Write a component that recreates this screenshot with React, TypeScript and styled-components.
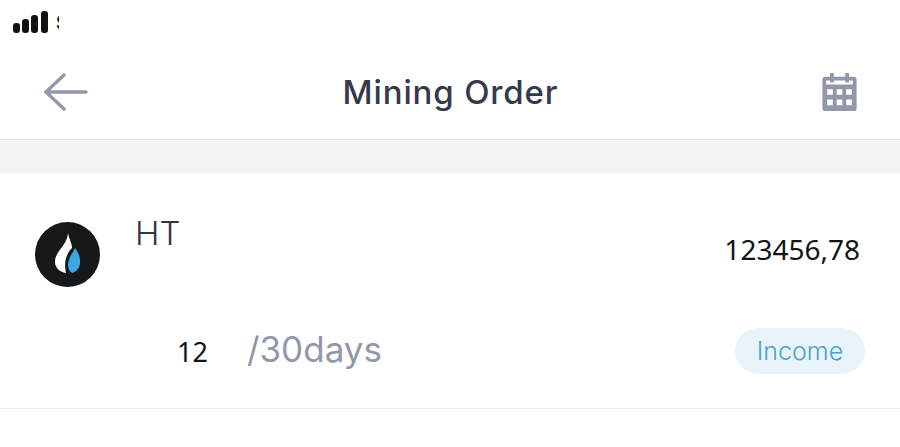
import React from 'react';
import styled, { createGlobalStyle } from 'styled-components';

const GlobalStyle = createGlobalStyle`
  html, body {
    margin: 0;
    padding: 0;
    background: #fff;
  }
  body {
    font-family: "Inter", "Liberation Sans", sans-serif;
  }
`

const Page = styled.div`
  width: 900px;
  height: 447px;
  overflow: hidden;
  background: #fff;
`

const StatusBar = styled.div`
  height: 46px;
  padding: 11px 0 0 13px;
  box-sizing: border-box;
  display: flex;
  align-items: flex-start;
  gap: 8px;
`

const CarrierClip = styled.span`
  width: 3px;
  height: 22px;
  overflow: hidden;
  font-size: 20px;
  line-height: 24px;
  font-weight: 700;
  color: #111;
`

const Header = styled.header`
  height: 94px;
  box-sizing: border-box;
  padding: 0 43px 2px 44px;
  display: grid;
  grid-template-columns: 1fr auto 1fr;
  align-items: center;
  border-bottom: 1px solid #e6e7ea;

  svg:last-child {
    justify-self: end;
  }
`

const Title = styled.h1`
  margin: 0;
  font-size: 33px;
  font-weight: 500;
  letter-spacing: 0.85px;
  color: #343a4c;
`

const Band = styled.div`
  height: 33px;
  background: #f3f4f6;
`

const Order = styled.section`
  height: 236px;
  box-sizing: border-box;
  padding: 40px 35px 0;
  border-bottom: 1px solid #ececef;
  display: grid;
  grid-template-columns: 100px 1fr auto;
  grid-template-rows: 115px 46px;
`

const Coin = styled.div`
  width: 65px;
  height: 65px;
  margin-top: 9px;
`

const Symbol = styled.div`
  font-size: 33px;
  font-weight: 300;
  line-height: 40px;
  color: #2f3547;
`

const Amount = styled.div`
  font-family: "Noto Sans", sans-serif;
  font-size: 28px;
  line-height: 36px;
  padding: 18px 5px 0 0;
  text-align: right;
  color: #141414;
`

const Progress = styled.div`
  grid-column: 1 / 3;
  padding-left: 142px;
  display: flex;
  align-items: center;
  gap: 39px;
`

const Done = styled.span`
  font-family: "Noto Sans", sans-serif;
  font-size: 27px;
  color: #141414;
`

const Total = styled.span`
  font-size: 35px;
  font-weight: 400;
  color: #9297aa;
  margin-bottom: 4px;
`

const Badge = styled.div`
  justify-self: end;
  width: 130px;
  height: 46px;
  border-radius: 23px;
  background: #e8f4fa;
  color: #45a5cb;
  font-size: 25px;
  font-weight: 300;
  display: flex;
  align-items: center;
  justify-content: center;
`

const App = () => (
  <Page>
    <GlobalStyle />
    <StatusBar>
      <svg width="35" height="22" viewBox="0 0 35 22" fill="#111">
        <rect x="0" y="12" width="7" height="10" rx="3" />
        <rect x="9" y="8" width="7" height="14" rx="3" />
        <rect x="18" y="4" width="7" height="18" rx="3" />
        <rect x="28" y="0" width="7" height="22" rx="3" />
      </svg>
      <CarrierClip>S</CarrierClip>
    </StatusBar>
    <Header>
      <svg width="44" height="38" viewBox="0 0 44 38" fill="none" stroke="#9297aa" strokeWidth="3.4" strokeLinecap="round" strokeLinejoin="round">
        <path d="M20 2 L2 19 L20 36" />
        <path d="M2 19 H42" />
      </svg>
      <Title>Mining Order</Title>
      <svg width="35" height="38" viewBox="0 0 36 40" fill="#9297aa">
        <path fillRule="evenodd" d="M3 4 H8 V0 H12 V4 H24 V0 H28 V4 H33 Q36 4 36 7 V37 Q36 40 33 40 H3 Q0 40 0 37 V7 Q0 4 3 4 Z M4 8 V12 H32 V8 H28 V10 H24 V8 H12 V10 H8 V8 Z M5 17 V23 H11 V17 Z M15 17 V23 H21 V17 Z M25 17 V23 H31 V17 Z M5 28 V34 H11 V28 Z M15 28 V34 H21 V28 Z M25 28 V34 H31 V28 Z" />
      </svg>
    </Header>
    <Band />
    <Order>
      <Coin>
        <svg width="65" height="65" viewBox="0 0 65 65">
          <circle cx="32.5" cy="32.5" r="32.5" fill="#17181a" />
          <path d="M33 11 C34 17 37 21 37 26 C33 30 28 38 31 51 C25 50 20 46 20 40 C20 29 32 24 33 11 Z" fill="#fff" />
          <path d="M40 26 C43 30 45.5 35 45 41 C45 46 41 50 37 51 C33 48 32 43 34 38 C35 33 38 31 40 26 Z" fill="#3aa6e2" />
        </svg>
      </Coin>
      <Symbol>HT</Symbol>
      <Amount>123456,78</Amount>
      <Progress>
        <Done>12</Done>
        <Total>/30days</Total>
      </Progress>
      <Badge>Income</Badge>
    </Order>
  </Page>
);

export default App;
